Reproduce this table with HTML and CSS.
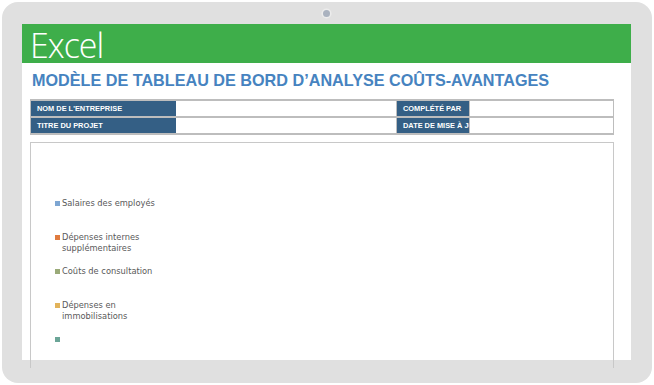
FILE: index.html
```html
<!DOCTYPE html>
<html lang="fr">
<head>
<meta charset="utf-8">
<link rel="stylesheet" href="styles.css">
</head>
<body>
<div class="frame">
  <div class="camera"></div>
  <div class="screen">
    <div class="appbar"><span class="appname">Excel</span></div>
    <h1 class="title">MODÈLE DE TABLEAU DE BORD D’ANALYSE COÛTS-AVANTAGES</h1>
    <div class="info">
      <div class="row">
        <div class="label l1">NOM DE L'ENTREPRISE</div>
        <div class="value v1"></div>
        <div class="label l2">COMPLÉTÉ PAR</div>
        <div class="value v2"></div>
      </div>
      <div class="row">
        <div class="label l1">TITRE DU PROJET</div>
        <div class="value v1"></div>
        <div class="label l2"><span class="clip">DATE DE MISE À JOUR</span></div>
        <div class="value v2"></div>
      </div>
    </div>
    <div class="chart">
      <ul class="legend">
        <li class="item"><span class="sw c1"></span><span class="txt">Salaires des employés</span></li>
        <li class="item"><span class="sw c2"></span><span class="txt">Dépenses internes<br>supplémentaires</span></li>
        <li class="item"><span class="sw c3"></span><span class="txt">Coûts de consultation</span></li>
        <li class="item"><span class="sw c4"></span><span class="txt">Dépenses en<br>immobilisations</span></li>
        <li class="item"><span class="sw c5"></span><span class="txt"></span></li>
      </ul>
    </div>
  </div>
</div>
</body>
</html>
```
FILE: styles.css
```css
html, body {
  margin: 0;
  padding: 0;
  background: #ffffff;
}
body {
  width: 654px;
  height: 385px;
  overflow: hidden;
  font-family: "Liberation Sans", Arial, sans-serif;
}
.frame {
  position: relative;
  margin: 2px 0 0 2px;
  width: 650px;
  height: 381px;
  box-sizing: border-box;
  background: #e0e0e0;
  border-radius: 16px;
  padding: 22px 21px 23px 20px;
  display: flex;
}
.camera {
  position: absolute;
  left: 321px;
  top: 8px;
  width: 7px;
  height: 7px;
  border-radius: 50%;
  background: #aab2bf;
  box-shadow: 0 0 0 1.5px #ececec;
}
.screen {
  flex: 1;
  background: #ffffff;
  display: flex;
  flex-direction: column;
  min-height: 0;
}
.appbar {
  height: 39px;
  box-sizing: border-box;
  background: #3eae4a;
  display: flex;
  align-items: center;
  padding: 3px 0 0 8px;
  flex: none;
}
.appname {
  color: #ffffff;
  font-family: "Open Sans", "Noto Sans", sans-serif;
  font-weight: 300;
  font-size: 34px;
  letter-spacing: -1px;
  line-height: 36px;
}
.title {
  margin: 8px 0 0 10px;
  font-size: 16.2px;
  font-weight: bold;
  color: #4683c0;
  line-height: 19px;
  white-space: nowrap;
}
.info {
  margin: 9px 17px 0 8px;
  border-top: 2px solid #bdbdbd;
  border-right: 1px solid #bdbdbd;
  border-left: 1px solid #bdbdbd;
}
.row {
  display: flex;
  height: 15px;
  border-bottom: 2px solid #bdbdbd;
}
.label {
  background: #345f85;
  color: #ffffff;
  font-size: 7.4px;
  font-weight: bold;
  line-height: 15px;
  padding-left: 6px;
  box-sizing: border-box;
  white-space: nowrap;
  overflow: hidden;
}
.l1 { width: 145px; }
.v1 { width: 220px; border-right: 1px solid #bdbdbd; }
.l2 { width: 72px; }
.value { background: #ffffff; }
.v2 { flex: 1; border-left: 1px solid #bdbdbd; }
.chart {
  margin: 7px 17px 0 8px;
  flex: 1;
  border: 1px solid #c8c8c8;
  border-bottom: none;
}
.legend {
  list-style: none;
  margin: 0;
  padding: 55px 0 0 24px;
  font-family: "DejaVu Sans", sans-serif;
  font-size: 8.3px;
  color: #595959;
}
.item {
  display: flex;
  align-items: flex-start;
  line-height: 11px;
  height: 34px;
}
.sw {
  width: 5px;
  height: 5px;
  margin-top: 3px;
  margin-right: 2px;
  flex: none;
}
.c1 { background: #7ea6d2; }
.c2 { background: #e07b3f; }
.c3 { background: #9aaa78; }
.c4 { background: #e2b35a; }
.c5 { background: #6ba597; }
```
